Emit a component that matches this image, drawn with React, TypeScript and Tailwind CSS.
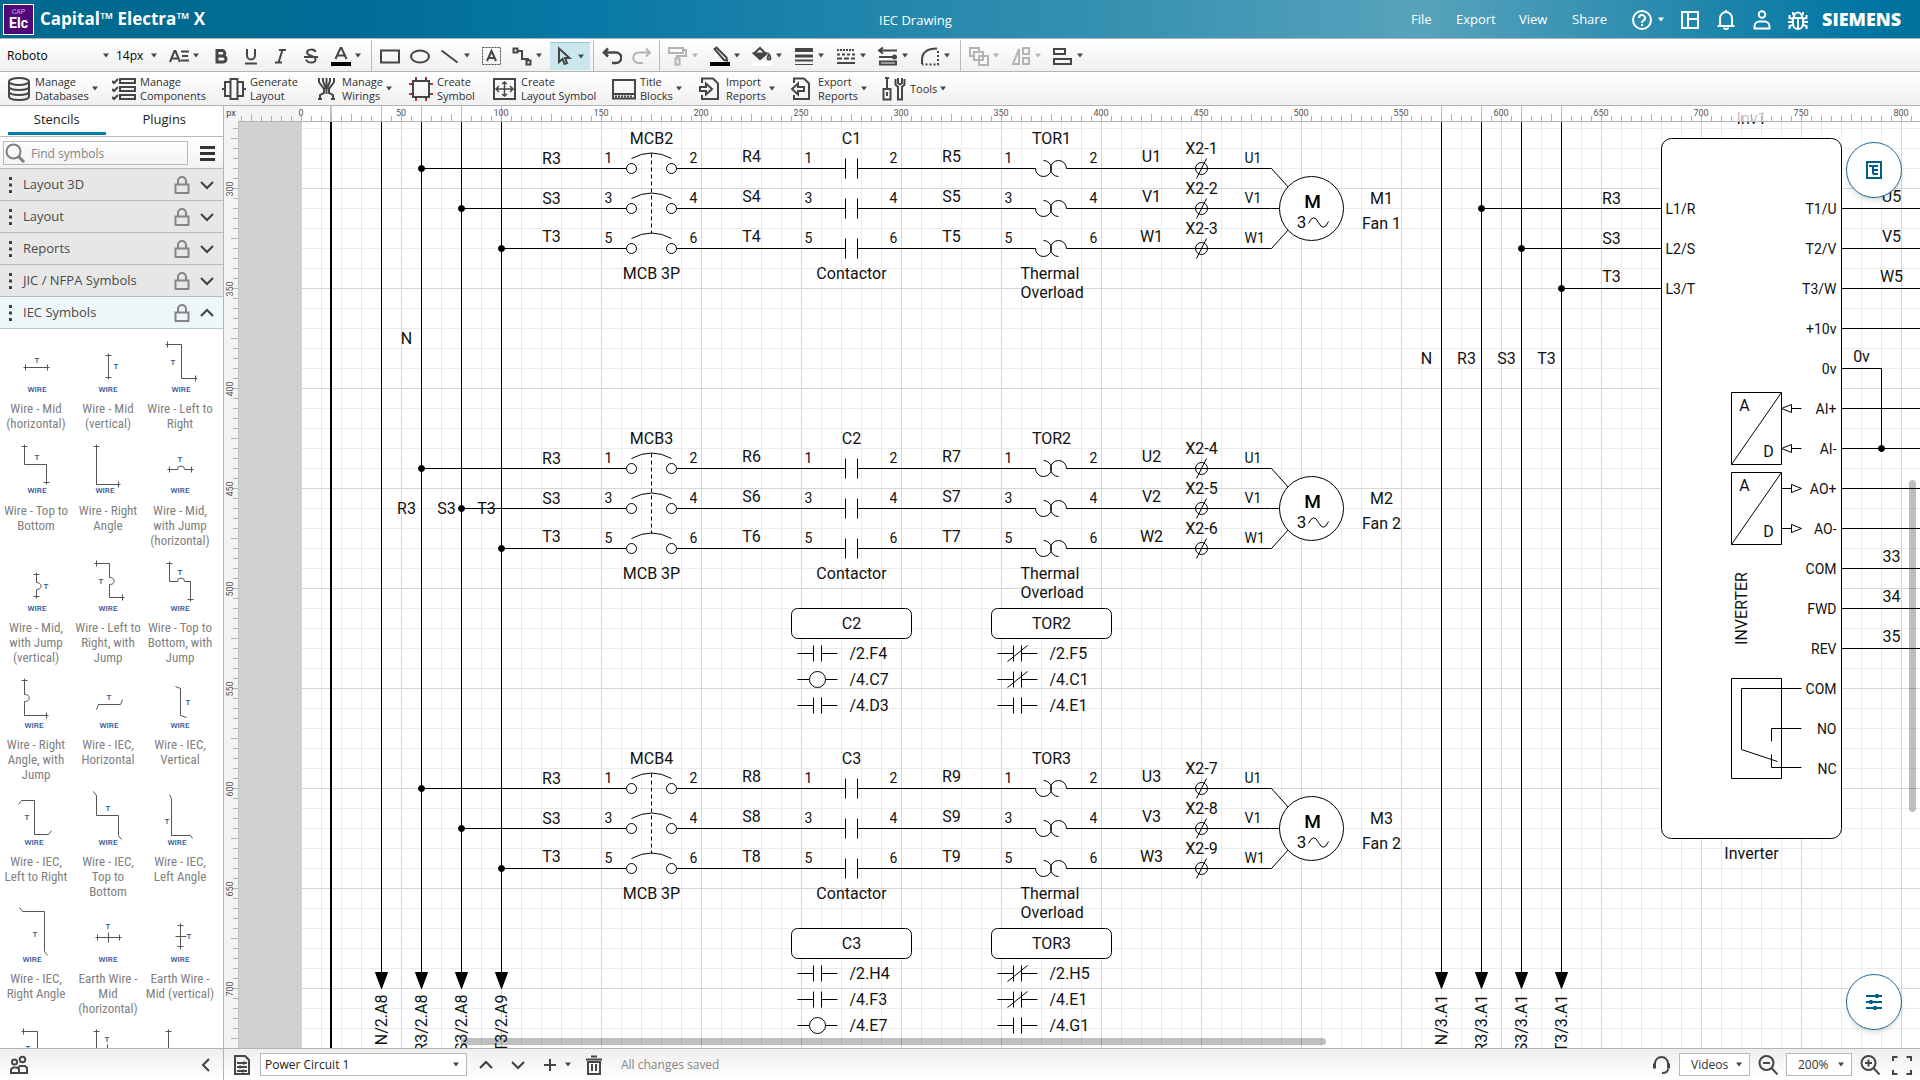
import type { ReactNode } from "react";

type Kids = { children: ReactNode };

/* ---------- shared bits ---------- */

function Icon({ children, size = 20, w = 2 }: Kids & { size?: number; w?: number }) {
  return (
    <svg
      width={size}
      height={size}
      viewBox={`0 0 ${size} ${size}`}
      fill="none"
      stroke="currentColor"
      strokeWidth={w}
      aria-hidden="true"
      className="shrink-0"
    >
      {children}
    </svg>
  );
}

function Caret() {
  return (
    <svg width="8" height="5" viewBox="0 0 8 5" fill="currentColor" aria-hidden="true" className="shrink-0">
      <path d="M1 0.5h6L4 4.5z" />
    </svg>
  );
}

function Sep() {
  return <span className="h-8 w-px bg-[#b9b9b9] mx-[3px]" />;
}

function Tool({ label, children, caret, disabled }: Kids & { label: string; caret?: boolean; disabled?: boolean }) {
  return (
    <button
      aria-label={label}
      disabled={disabled}
      className={`h-8 flex items-center gap-[3px] pl-[5px] ${caret ? "w-[42px]" : "w-[30px]"} ${
        disabled ? "text-[#b4b4b4]" : "text-[#464646]"
      }`}
    >
      {children}
      {caret && <Caret />}
    </button>
  );
}

interface DropdownProps {
  label: string;
  value: string;
  className: string;
  selectClass: string;
  caretClass?: string;
}

function Dropdown({ label, value, className, selectClass, caretClass = "right-[6px]" }: DropdownProps) {
  return (
    <div className={`relative flex items-center ${className}`}>
      <select
        aria-label={label}
        className={`appearance-none w-full h-full bg-transparent outline-none ${selectClass}`}
        defaultValue={value}
      >
        <option>{value}</option>
      </select>
      <span className={`absolute ${caretClass} text-[#464646] pointer-events-none`}>
        <Caret />
      </span>
    </div>
  );
}

/* ---------- header ---------- */

function Header() {
  return (
    <header className="relative h-[38px] shrink-0 flex items-center text-white bg-[linear-gradient(90deg,#00698f_0%,#006c95_18%,#0878a6_30%,#3490b0_57%,#57a3bc_74%,#3390b1_84%,#0076a3_97%,#00719c_100%)]">
      <div className="ml-[3px] w-[31px] h-[31px] border border-white bg-[#500a78] flex flex-col items-center justify-center">
        <span className="text-[7px] leading-[8px] text-[#d0a0f0] font-[Roboto]">CAP</span>
        <span className="text-[14px] leading-[14px] font-bold font-[Roboto]">Elc</span>
      </div>
      <h1 className="ml-[6px] text-[17px] leading-5 font-bold">Capital™ Electra™ X</h1>
      <span className="absolute left-1/2 top-[10px] -translate-x-[81px] text-[13px] leading-5">IEC Drawing</span>

      <nav className="ml-auto flex items-center pt-px text-[13px]">
        <a href="#file" className="w-[45px]">File</a>
        <a href="#export" className="w-[63px]">Export</a>
        <a href="#view" className="w-[53px]">View</a>
        <a href="#share" className="w-[60px]">Share</a>
      </nav>
      <button aria-label="Help" className="flex items-center gap-[5px] w-[49px] pt-px">
        <Icon>
          <circle cx="10" cy="10" r="9" />
          <path d="M7 8a3 3 0 1 1 4.400 2.600C10.300 11.200 10 11.700 10 13" />
          <path d="M10 14v2" />
        </Icon>
        <Caret />
      </button>
      <button aria-label="Panels" className="w-[35px] pt-px">
        <Icon>
          <path d="M1 2h16v16H1zM7 2v16M7 8h10M12 8V2" strokeWidth="0" />
          <path d="M1 2h16v16H1zM7 2v16M7 9h10" />
        </Icon>
      </button>
      <button aria-label="Notifications" className="w-9 pt-px">
        <Icon>
          <path d="M1.500 16h17M4 16V8.500a6 6.500 0 0 1 12 0V16M8 17.500c0 2 4 2 4 0M10 0v2" />
        </Icon>
      </button>
      <button aria-label="Account" className="w-9 pt-px">
        <Icon>
          <circle cx="10" cy="4.500" r="3.300" />
          <path d="M2.500 18.500V16a5 5 0 0 1 5-4.500h5a5 5 0 0 1 5 4.500v2.500z" />
        </Icon>
      </button>
      <button aria-label="Report a bug" className="w-[34px] pt-px">
        <Icon>
          <path d="M5 8v6a5 5 0 0 0 10 0V8zM10 8v11M6 7a4 4.500 0 0 1 8 0M5 2v2l2 2M15 2v2l-2 2M0 12h5M15 12h5M5 9L1.500 8V5M15 9l3.500-1V5M5 15l-3.500 1v3M15 15l3.500 1v3" />
        </Icon>
      </button>
      <span className="w-[98px] text-[18px] leading-6 font-extrabold">SIEMENS</span>
    </header>
  );
}

/* ---------- toolbars ---------- */

function FormatBar() {
  return (
    <div className="h-[33px] shrink-0 flex items-center pt-px border-t border-[#b4b4b4] bg-linear-to-b from-white to-[#f0f0f0]">
      <Dropdown label="Font" value="Roboto" className="w-28 h-7" selectClass="pl-[7px] text-[12px]" caretClass="right-[2px]" />
      <Dropdown label="Font size" value="14px" className="w-[47px] h-7" selectClass="pl-1 text-[12px]" caretClass="right-px" />
      <span className="w-[5px]" />
      <Tool label="Text format" caret>
        <Icon>
          <path d="M1 16L5.500 5h1L11 16M3 12.500h6M12 5.500h8M13 10h6M12 14.500h8" />
        </Icon>
      </Tool>
      <Tool label="Bold">
        <Icon w={3}>
          <path d="M6 4.500h5a2.500 2.500 0 0 1 0 5.500H6zM6 10h6a2.800 2.800 0 0 1 0 6H6z" />
        </Icon>
      </Tool>
      <Tool label="Underline">
        <Icon>
          <path d="M6 3v6.500a4 4 0 0 0 8 0V3M4 17.500h12" />
        </Icon>
      </Tool>
      <Tool label="Italic">
        <Icon>
          <path d="M8 4h7M4 16.500h7M11.500 4l-4 12.500" />
        </Icon>
      </Tool>
      <Tool label="Strikethrough">
        <Icon>
          <path d="M14.500 6c-1-3.500-8.500-3-8.500.5 0 4 8.500 2.500 8.500 7 0 4-8 4-9.500 0M3 11h14" />
        </Icon>
      </Tool>
      <Tool label="Text colour" caret>
        <Icon>
          <path d="M4.500 13L9.500 2h1l5 11M6.500 9.500h7" />
          <path d="M0 18h20" stroke="#000" strokeWidth="4" />
        </Icon>
      </Tool>
      <Sep />
      <Tool label="Rectangle">
        <Icon>
          <path d="M1 4.500h18v12H1z" />
        </Icon>
      </Tool>
      <Tool label="Ellipse">
        <Icon>
          <ellipse cx="10" cy="10.500" rx="9" ry="6" />
        </Icon>
      </Tool>
      <Tool label="Line" caret>
        <Icon>
          <path d="M1.500 4.500l16 12" />
        </Icon>
      </Tool>
      <Tool label="Text box">
        <Icon w={1}>
          <path d="M.5 1.500h18v17H.5z" strokeDasharray="2 1" />
          <path d="M5 15l4.500-10L14 15M6.500 12h6" strokeWidth="2" />
        </Icon>
      </Tool>
      <Tool label="Connector" caret>
        <Icon>
          <path d="M1.500 2.500h4v4h-4zM14.500 14.500h4v4h-4zM5.500 5H10v8h6v2" />
        </Icon>
      </Tool>
      <button
        aria-label="Select"
        className="h-7 w-10 ml-px flex items-center gap-[3px] pl-1 bg-[#cbe6ec] border-t border-[#8cc5d8] text-[#464646]"
      >
        <Icon>
          <path d="M5 2.500v13.500l3.500-3 2 5 2.500-1-2-5h4.500z" />
        </Icon>
        <Caret />
      </button>
      <Sep />
      <Tool label="Undo">
        <Icon w={2.5}>
          <path d="M2.500 6.500H14a4.800 4.800 0 0 1 0 10.500h-4M6 2.500l-4 4 4 4" />
        </Icon>
      </Tool>
      <Tool label="Redo" disabled>
        <Icon>
          <path d="M17.500 6.500H6.500A5 5 0 0 0 6.500 17H11M14 2.500l4 4-4 4" />
        </Icon>
      </Tool>
      <span className="h-8 w-px bg-[#b9b9b9] ml-[2px] mr-[3px]" />
      <Tool label="Format painter" caret disabled>
        <Icon>
          <path d="M1 2h14v5H1zM15 4h3v6H9v3M7.500 12.500h4v6h-4z" />
        </Icon>
      </Tool>
      <Tool label="Line colour" caret>
        <Icon>
          <path d="M4.500 3l2-1.500 10 10 .5 3-3-.5-9.500-11z" />
          <path d="M0 18h20" stroke="#000" strokeWidth="4" />
        </Icon>
      </Tool>
      <Tool label="Fill colour" caret>
        <Icon>
          <path d="M2 7.500L8 2l6 6-6 5z" />
          <path d="M2 7.500h12.500L8 13z" fill="currentColor" />
          <path d="M17 8.500c2 3 2 5 0 5s-2-2 0-5z" />
          <path d="M0 18h20" stroke="#fff" strokeWidth="4" />
        </Icon>
      </Tool>
      <Tool label="Line width" caret>
        <Icon>
          <path d="M1 4h18" strokeWidth="4" />
          <path d="M1 10h18" strokeWidth="3" />
          <path d="M1 14.500h18" />
          <path d="M1 18.500h18" strokeWidth="1" />
        </Icon>
      </Tool>
      <Tool label="Line style" caret>
        <Icon>
          <path d="M1 4h18" strokeDasharray="2 1" />
          <path d="M1 8.500h18" strokeDasharray="3 2" />
          <path d="M1 12.500h18" strokeDasharray="5 2" />
          <path d="M1 17h18" />
        </Icon>
      </Tool>
      <Tool label="Arrow style" caret>
        <Icon>
          <path d="M1 4.500h18M5 1.500l-4 3 4 3M1 11h14M2 15.500h16v3H2z" />
          <circle cx="16.500" cy="11" r="1.500" fill="currentColor" />
        </Icon>
      </Tool>
      <Tool label="Corner style" caret>
        <Icon>
          <path d="M2 18V14Q2 2.500 17 2.500" />
          <path d="M18 5v13.500H2" strokeDasharray="2 2" />
        </Icon>
      </Tool>
      <Sep />
      <Tool label="Arrange" caret disabled>
        <Icon>
          <path d="M1 2h9v8H1z" />
          <path d="M5 6h9v8H5zM10 10h9v9h-9z" fill="#fafafa" />
        </Icon>
      </Tool>
      <Tool label="Flip" caret disabled>
        <Icon>
          <path d="M8 3v15H2zM12 2h6v6h-6zM12 12h6v6h-6z" />
        </Icon>
      </Tool>
      <Tool label="Align" caret>
        <Icon>
          <path d="M1 3h11v5H1zM1 13h17v5H1z" />
        </Icon>
      </Tool>
    </div>
  );
}

function Action({ lines, width, caret, children }: Kids & { lines: string[]; width: string; caret?: boolean }) {
  return (
    <button className={`${width} shrink-0 h-full flex items-center text-left text-[11px] leading-[14px] text-[#303030]`}>
      <span className="text-[#464646]">{children}</span>
      <span className="ml-1 whitespace-nowrap">
        {lines.map((l) => (
          <span key={l} className="block">
            {l}
          </span>
        ))}
      </span>
      {caret && (
        <span className="ml-[2px] text-[#464646]">
          <Caret />
        </span>
      )}
    </button>
  );
}

function ActionBar() {
  return (
    <div className="h-[34px] shrink-0 flex items-center pl-[7px] border-t border-[#b4b4b4] bg-linear-to-b from-white to-[#f0f0f0]">
      <Action lines={["Manage", "Databases"]} width="w-[105px]" caret>
        <Icon size={24}>
          <ellipse cx="12" cy="4.500" rx="10" ry="3.500" />
          <path d="M2 4.500v15c0 4.600 20 4.600 20 0v-15M2 9.500c0 4.600 20 4.600 20 0M2 14.500c0 4.600 20 4.600 20 0" />
        </Icon>
      </Action>
      <Action lines={["Manage", "Components"]} width="w-[110px]">
        <Icon size={24}>
          <path d="M8 2h15v4H8zM8 10h15v4H8zM8 18h15v4H8zM0 4l2 2 4-4M0 12l2 2 4-4M0 20l2 2 4-4" />
        </Icon>
      </Action>
      <Action lines={["Generate", "Layout"]} width="w-[92px]">
        <Icon size={24}>
          <path d="M8.500 2h7v20h-7zM3 5h5.500v14H3zM15.500 5H21v14h-5.500zM0 12h3M21 12h3" />
        </Icon>
      </Action>
      <Action lines={["Manage", "Wirings"]} width="w-[95px]" caret>
        <Icon size={24}>
          <path d="M5 1v4l5 7v4l-4 2v5M20 1v4l-5 7v4l4 2v5M12.500 1v16M9 1v3l3 8M16 1v3l-3 8M4 22h4M17 22h4" />
        </Icon>
      </Action>
      <Action lines={["Create", "Symbol"]} width="w-[84px]">
        <Icon size={24}>
          <path d="M4 4h16v16H4zM0 7h4M0 17h4M20 7h4M20 17h4M7 4V0M17 4V0M7 20v4M17 20v4" />
          <path d="M0 7h2M0 17h2M22 7h2M22 17h2M7 1V0M17 1V0M7 22v2M17 22v2" stroke="#e03030" />
        </Icon>
      </Action>
      <Action lines={["Create", "Layout Symbol"]} width="w-[119px]">
        <Icon size={24}>
          <path d="M1 2h21v20H1z" />
          <path d="M3 12h17M11.500 5v14M6 9l-3 3 3 3M17 9l3 3-3 3M9 7l2.500-2L14 7M9 17l2.500 2 2.500-2" strokeWidth="1.5" />
        </Icon>
      </Action>
      <Action lines={["Title", "Blocks"]} width="w-[86px]" caret>
        <Icon size={24}>
          <path d="M1 3h22v18.500H1zM1 17h22" />
          <path d="M3 19.500h18" strokeDasharray="2 1" />
        </Icon>
      </Action>
      <Action lines={["Import", "Reports"]} width="w-[92px]" caret>
        <Icon size={24}>
          <path d="M4 6V1.500h11l5 5V22H4v-4M2 10h6V6.500l6 5.500-6 5.500V14H2z" />
        </Icon>
      </Action>
      <Action lines={["Export", "Reports"]} width="w-[92px]" caret>
        <Icon size={24}>
          <path d="M4 6V1.500h10l5 5V22H4v-4M14 10H8V6.500L2 12l6 5.500V14h6z" />
        </Icon>
      </Action>
      <Action lines={["Tools"]} width="w-[80px]" caret>
        <Icon size={24}>
          <path d="M5 1v11M3 1h4M1.500 12h7v10.500h-7zM5 15v4M13.500 2v5.500l2.500 2.500v12.500h4V10l2.500-2.500V2M16 1v5l2 1.500L20 6V1" />
        </Icon>
      </Action>
    </div>
  );
}

/* ---------- sidebar ---------- */

function Lock() {
  return (
    <svg width="16" height="18" viewBox="0 0 16 18" fill="none" stroke="#858585" strokeWidth="2" aria-hidden="true">
      <path d="M1.500 8.500h13V17h-13zM4 8.500V5a4 4 0 0 1 8 0v3.500" />
    </svg>
  );
}

function Chevron({ d }: { d: string }) {
  return (
    <svg width="14" height="14" viewBox="0 0 14 14" fill="none" stroke="#404040" strokeWidth="2" aria-hidden="true">
      <path d={d} />
    </svg>
  );
}

const CHEVRON_UP = "M1 10l6-6 6 6";
const CHEVRON_DOWN = "M1 4l6 6 6-6";

function LibraryRow({ name, open }: { name: string; open?: boolean }) {
  return (
    <button
      aria-expanded={!!open}
      className={`h-8 shrink-0 flex items-center border-t border-[#b9b9b9] text-left text-[#4a4a4a] text-[13px] pt-px pl-2 pr-[9px] ${
        open ? "bg-[#edf6f8]" : "bg-[#e7e7e7]"
      }`}
    >
      <svg width="5" height="18" viewBox="0 0 5 18" fill="#404040" aria-hidden="true">
        <path d="M1 1h3v3H1zM1 7.500h3v3H1zM1 14h3v3H1z" />
      </svg>
      <span className="ml-[10px] flex-1">{name}</span>
      <Lock />
      <span className="ml-[10px]">
        <Chevron d={open ? CHEVRON_UP : CHEVRON_DOWN} />
      </span>
    </button>
  );
}

interface Stencil {
  d: string;
  t?: [number, number];
  wire: [number, number];
  label: string[];
}

// every thumbnail is drawn in a 72x72 cell
const STENCILS: Stencil[][] = [
  [
    { d: "M23 38h26M25 35v6M47 35v6", t: [37, 31], wire: [37, 61], label: ["Wire - Mid", "(horizontal)"] },
    { d: "M36 24v26M33 26h6M33 48h6", t: [44, 37], wire: [36, 61], label: ["Wire - Mid", "(vertical)"] },
    { d: "M21 15h16v34h16M23 12v6M51 46v6", t: [29, 33], wire: [37, 61], label: ["Wire - Left to", "Right"] },
  ],
  [
    { d: "M24 13v20h22v20M21 15h6M43 51h6", t: [37, 26], wire: [37, 60], label: ["Wire - Top to", "Bottom"] },
    { d: "M24 13v40h24M21 15h6M46 50v6", wire: [33, 60], label: ["Wire - Right", "Angle"] },
    { d: "M23 38h10a3 3 0 0 1 7 0h9M25 35v6M47 35v6", t: [36, 28], wire: [36, 60], label: ["Wire - Mid,", "with Jump", "(horizontal)"] },
  ],
  [
    { d: "M36 24v10a4 3 0 0 1 0 7v9M33 26h6M33 48h6", t: [46, 38], wire: [37, 61], label: ["Wire - Mid,", "with Jump", "(vertical)"] },
    { d: "M22 15h15v14a4 3 0 0 1 0 7v13h15M24 12v6M50 46v6", t: [29, 33], wire: [36, 61], label: ["Wire - Left to", "Right, with", "Jump"] },
    { d: "M25 13v20h8a3 3 0 0 1 7 0h6v20M22 15h6M43 51h6", t: [36, 24], wire: [36, 61], label: ["Wire - Top to", "Bottom, with", "Jump"] },
  ],
  [
    { d: "M24 13v16a4 3 0 0 1 0 7v14h24M21 15h6M46 47v6", wire: [34, 61], label: ["Wire - Right", "Angle, with", "Jump"] },
    { d: "M24 44l2-5h22l2-5", t: [37, 32], wire: [37, 61], label: ["Wire - IEC,", "Horizontal"] },
    { d: "M31 21l5 2v27l6 2", t: [44, 37], wire: [36, 61], label: ["Wire - IEC,", "Vertical"] },
  ],
  [
    { d: "M18 22l3-4h13v34h14l3-4", t: [27, 35], wire: [34, 61], label: ["Wire - IEC,", "Left to Right"] },
    { d: "M21 9l3 4v20h22v20l3 4", t: [36, 26], wire: [36, 61], label: ["Wire - IEC,", "Top to", "Bottom"] },
    { d: "M25 12l2 4v37h19l2 3", t: [23, 39], wire: [33, 61], label: ["Wire - IEC,", "Left Angle"] },
  ],
  [
    { d: "M19 8l3 4h22v40l3 4", t: [35, 35], wire: [32, 61], label: ["Wire - IEC,", "Right Angle"] },
    { d: "M23 38h26M25 35v6M47 35v6M36 33v10", t: [36, 27], wire: [36, 61], label: ["Earth Wire -", "Mid", "(horizontal)"] },
    { d: "M36 24v26M33 26h6M33 47h6M31 37h11", t: [45, 37], wire: [36, 61], label: ["Earth Wire -", "Mid (vertical)"] },
  ],
  [
    { d: "M21 15h16v34M23 12v6", t: [28, 32], wire: [36, 61], label: ["Earth Wire -", "Left to Right"] },
    { d: "M24 13v40M21 15h6M35 28v10", t: [35, 23], wire: [36, 61], label: ["Earth Wire -", "Top to Bottom"] },
    { d: "M24 13v40M21 15h6", wire: [36, 61], label: ["Earth Wire -", "Right Angle"] },
  ],
];

function StencilCell({ item }: { item: Stencil }) {
  return (
    <button className="w-[72px] flex flex-col items-center">
      <svg width="72" height="72" viewBox="0 0 72 72" aria-hidden="true" className="font-[Roboto]">
        <path d={item.d} transform="translate(.5 .5)" fill="none" stroke="#555" />
        <g fill="#2f5597" fontSize="8" fontWeight="500" textAnchor="middle">
          {item.t && (
            <text x={item.t[0]} y={item.t[1] + 3}>
              T
            </text>
          )}
          <text x={item.wire[0]} y={item.wire[1] + 2}>
            WIRE
          </text>
        </g>
      </svg>
      <span className="whitespace-nowrap text-center text-[13px] leading-[15px] text-[#808080] font-['Roboto_Condensed','Liberation_Sans_Narrow',Roboto,sans-serif]">
        {item.label.map((l) => (
          <span key={l} className="block">
            {l}
          </span>
        ))}
      </span>
    </button>
  );
}

function Sidebar() {
  return (
    <aside className="w-[224px] shrink-0 flex flex-col border-r border-[#b4b4b4] bg-white">
      <div role="tablist" className="h-[31px] shrink-0 flex pl-2 text-[13px] font-medium text-[#222] border-b border-[#b9b9b9]">
        <button role="tab" aria-selected="true" className="w-[98px] h-[29px] pt-px border-b-[3px] border-[#0b7ba8]">
          Stencils
        </button>
        <button role="tab" aria-selected="false" className="w-[118px] h-[29px] pt-px border-b-[3px] border-transparent">
          Plugins
        </button>
      </div>
      <div className="h-[31px] shrink-0 flex items-center pt-px pl-[3px] pr-2 bg-linear-to-b from-white to-[#f2f2f2]">
        <div className="relative w-[185px] h-6 flex items-center">
          <span className="absolute left-[2px] text-[#808080]">
            <Icon>
              <circle cx="8.500" cy="8.500" r="7" />
              <path d="M13.500 13.500l5.500 5.500" strokeWidth="3" />
            </Icon>
          </span>
          <input
            aria-label="Find symbols"
            placeholder="Find symbols"
            className="w-full h-full pl-[27px] text-[12px] bg-transparent border border-[#b9b9b9] placeholder:text-[#858585] outline-none"
          />
        </div>
        <button aria-label="Menu" className="ml-auto text-[#333]">
          <svg width="15" height="15" viewBox="0 0 15 15" fill="currentColor" aria-hidden="true">
            <path d="M0 0h15v3H0zM0 6h15v3H0zM0 12h15v3H0z" />
          </svg>
        </button>
      </div>
      <LibraryRow name="Layout 3D" />
      <LibraryRow name="Layout" />
      <LibraryRow name="Reports" />
      <LibraryRow name="JIC / NFPA Symbols" />
      <LibraryRow name="IEC Symbols" open />
      <div className="flex-1 min-h-0 overflow-hidden border-t border-[#b9c9cc]">
        {STENCILS.map((row, i) => (
          <div key={i} className="flex items-start">
            {row.map((s) => (
              <StencilCell key={s.label.join(" ")} item={s} />
            ))}
          </div>
        ))}
      </div>
    </aside>
  );
}

/* ---------- schematic (sheet units, 2 per ruler unit) ---------- */

type Contact = "no" | "nc" | "coil";

interface Feeder {
  y: number;
  n: number;
  wires: [number, number];
  fan: string;
  refs?: [Contact, string][][];
}

const FEEDERS: Feeder[] = [
  { y: 580, n: 1, wires: [4, 5], fan: "Fan 1" },
  {
    y: 880,
    n: 2,
    wires: [6, 7],
    fan: "Fan 2",
    refs: [
      [["no", "/2.F4"], ["coil", "/4.C7"], ["no", "/4.D3"]],
      [["nc", "/2.F5"], ["nc", "/4.C1"], ["no", "/4.E1"]],
    ],
  },
  {
    y: 1200,
    n: 3,
    wires: [8, 9],
    fan: "Fan 2",
    refs: [
      [["no", "/2.H4"], ["no", "/4.F3"], ["coil", "/4.E7"]],
      [["nc", "/2.H5"], ["nc", "/4.E1"], ["no", "/4.G1"]],
    ],
  },
];

interface LabelProps {
  x: number;
  y: number;
  size?: number;
  anchor?: "start" | "middle" | "end";
  children: ReactNode;
}

function T({ x, y, size = 16, anchor = "middle", children }: LabelProps) {
  return (
    <text x={x} y={y - 1} fontSize={size} textAnchor={anchor} fill="#111" stroke="none">
      {children}
    </text>
  );
}

function Dot({ x, y }: { x: number; y: number }) {
  return <circle cx={x} cy={y} r="3" fill="#000" />;
}

function Phase({ y, i, feeder }: { y: number; i: number; feeder: Feeder }) {
  const p = "RST"[i];
  const winding = "UVW"[i];
  const a = i * 2 + 1;
  const b = i * 2 + 2;
  return (
    <g transform={`translate(0 ${y})`}>
      <path d={`M${120 + i * 40} 0H325M375 0H544M556 0H734M765 0H970`} />
      <Dot x={120 + i * 40} y={0} />
      <circle cx="330" cy="0" r="5" fill="#fff" />
      <circle cx="370" cy="0" r="5" fill="#fff" />
      <path d="M330 -10Q350 -21 370 -10M544 -10v20M556 -10v20" />
      <path d="M734 0a8 8 0 1 0 8 -8M765 0a8 8 0 1 0 -8 8" />
      <circle cx="900" cy="0" r="6" />
      <path d="M895 10L905 -10" />
      <T x={250} y={i === 2 ? -6 : -4}>{p}3</T>
      <T x={450} y={-6}>{p}{feeder.wires[0]}</T>
      <T x={650} y={-6}>{p}{feeder.wires[1]}</T>
      <T x={850} y={-6}>{winding}{feeder.n}</T>
      <T x={900} y={-14}>X2-{(feeder.n - 1) * 3 + i + 1}</T>
      <T x={943} y={-5} size={14} anchor="start">{winding}1</T>
      {[307, 507, 707].map((x) => (
        <T key={x} x={x} y={-5} size={14}>{a}</T>
      ))}
      {[392, 592, 792].map((x) => (
        <T key={x} x={x} y={-5} size={14}>{b}</T>
      ))}
    </g>
  );
}

function RefTable({ x, title, rows }: { x: number; title: string; rows: [Contact, string][] }) {
  return (
    <g transform={`translate(${x} 140)`}>
      <rect width="120" height="30" rx="6" fill="#fff" />
      <T x={60} y={21}>{title}</T>
      {rows.map(([kind, ref], i) => (
        <g key={i} transform={`translate(0 ${45 + i * 26})`}>
          {kind === "coil" ? (
            <>
              <path d="M6 0H18M34 0H46" />
              <circle cx="26" cy="0" r="8" fill="#fff" />
            </>
          ) : (
            <path d="M6 0H22M22 -8v16M30 -8v16M30 0H46" />
          )}
          {kind === "nc" && <path d="M16 8L36 -8" />}
          <T x={58} y={6} anchor="start">{ref}</T>
        </g>
      ))}
    </g>
  );
}

function FeederGroup({ feeder }: { feeder: Feeder }) {
  const { y, n } = feeder;
  return (
    <g>
      <path d={`M350 ${y - 15}v80`} strokeDasharray="4 3" />
      {[0, 1, 2].map((i) => (
        <Phase key={i} y={y + i * 40} i={i} feeder={feeder} />
      ))}
      <g transform={`translate(0 ${y})`}>
        <T x={350} y={-24}>MCB{n + 1}</T>
        <T x={550} y={-24}>C{n}</T>
        <T x={750} y={-24}>TOR{n}</T>
        <T x={350} y={111}>MCB 3P</T>
        <T x={550} y={111}>Contactor</T>
        <T x={719} y={111} anchor="start">Thermal</T>
        <T x={719} y={130} anchor="start">Overload</T>
        <path d="M970 0l18 20M970 40h10M970 80l18 -20" />
        <circle cx="1010" cy="40" r="32" fill="#fff" />
        <text x="1011" y="39" fontSize="19" fontWeight="500" textAnchor="middle" fill="#000" stroke="none">M</text>
        <T x={1000} y={60} size={17}>3</T>
        <path d="M1007 55q5 -11 10 -1t10 -1" />
        <T x={1080} y={36}>M{n}</T>
        <T x={1080} y={61}>{feeder.fan}</T>
      </g>
      {feeder.refs && (
        <g transform={`translate(0 ${y})`}>
          <RefTable x={490} title={`C${n}`} rows={feeder.refs[0]} />
          <RefTable x={690} title={`TOR${n}`} rows={feeder.refs[1]} />
        </g>
      )}
    </g>
  );
}

const BUSES = [
  { x: 80, label: "N/2.A8" },
  { x: 120, label: "R3/2.A8" },
  { x: 160, label: "S3/2.A8" },
  { x: 200, label: "T3/2.A9" },
  { x: 1140, label: "N/3.A1" },
  { x: 1180, label: "R3/3.A1" },
  { x: 1220, label: "S3/3.A1" },
  { x: 1260, label: "T3/3.A1" },
];

const TERMINALS = ["T1/U", "T2/V", "T3/W", "+10v", "0v", "AI+", "AI-", "AO+", "AO-", "COM", "FWD", "REV", "COM", "NO", "NC"];
const OUT_WIRES = [620, 660, 700, 740, 820, 860, 900, 940, 980, 1020, 1060];

function Converter({ y }: { y: number }) {
  return (
    <g transform={`translate(1430 ${y})`}>
      <path d="M0 0h50v72H0zM0 72L50 0" />
      <T x={13} y={19}>A</T>
      <T x={37} y={65}>D</T>
    </g>
  );
}

function Inverter() {
  return (
    <g>
      <T x={1450} y={536}>Inv1</T>
      <rect x="1360" y="550" width="180" height="700" rx="10" fill="#fff" />
      <T x={1450} y={1271}>Inverter</T>
      {["R", "S", "T"].map((p, i) => (
        <g key={p}>
          <path d={`M${1180 + i * 40} ${620 + i * 40}H1360`} />
          <Dot x={1180 + i * 40} y={620 + i * 40} />
          <T x={1310} y={(i === 2 ? 614 : 616) + i * 40}>{p}3</T>
          <T x={1364} y={626 + i * 40} size={14} anchor="start">L{i + 1}/{p}</T>
          <T x={1590} y={614 + i * 40}>{"UVW"[i]}5</T>
          <T x={1590} y={974 + i * 40}>{33 + i}</T>
        </g>
      ))}
      {TERMINALS.map((t, i) => (
        <T key={i} x={1535} y={626 + i * 40} size={14} anchor="end">{t}</T>
      ))}
      <path d={OUT_WIRES.map((y) => `M1540 ${y}H3000`).join("")} />
      <path d="M1540 780h40v80" />
      <Dot x={1580} y={860} />
      <T x={1560} y={774}>0v</T>

      <Converter y={804} />
      <Converter y={884} />
      <path d="M1480 820l10 -4v8zM1490 820h10M1480 860l10 -4v8zM1490 860h10" />
      <path d="M1500 900l-10 -4v8zM1490 900h-10M1500 940l-10 -4v8zM1490 940h-10" />
      <g transform="translate(1446 1020) rotate(-90)">
        <T x={0} y={0}>INVERTER</T>
      </g>
      <path d="M1430 1090h50v100h-50zM1500 1100h-60v61l36 12M1500 1140h-30v13M1500 1179h-30v-13" />
    </g>
  );
}

function Sheet() {
  return (
    <svg className="absolute inset-0 w-full h-full font-[Roboto]" role="img" aria-label="Power circuit schematic">
      <defs>
        <pattern id="minor" width="20" height="20" patternUnits="userSpaceOnUse">
          <path d="M0 0h20v1H0zM0 0h1v20H0z" fill="#ececec" />
        </pattern>
        <pattern id="major" width="100" height="100" patternUnits="userSpaceOnUse">
          <path d="M0 0h100v1H0zM0 0h1v100H0z" fill="#d6d6d6" />
        </pattern>
      </defs>
      <g transform="translate(77 -518)">
        <rect width="3000" height="2400" fill="#fff" />
        <rect width="3000" height="2400" fill="url(#minor)" />
        <rect width="3000" height="2400" fill="url(#major)" />
      </g>
      <g transform="translate(77.5 -517.5)" fill="none" stroke="#000">
        <path d="M29.500 0V2400" strokeWidth="2" />
        {BUSES.map((b) => (
          <g key={b.label}>
            <path d={`M${b.x} 0V1390`} />
            <path d={`M${b.x - 6} 1384h12l-6 16z`} fill="#000" />
            <g transform={`translate(${b.x + 6} 1406) rotate(-90)`}>
              <T x={0} y={0} anchor="end">{b.label}</T>
            </g>
          </g>
        ))}
        {FEEDERS.map((f) => (
          <FeederGroup key={f.n} feeder={f} />
        ))}
        <Inverter />
        <T x={105} y={756}>N</T>
        {["R3", "S3", "T3"].map((t, i) => (
          <T key={t} x={105 + i * 40} y={926}>{t}</T>
        ))}
        {["N", "R3", "S3", "T3"].map((t, i) => (
          <T key={t} x={1125 + i * 40} y={776}>{t}</T>
        ))}
      </g>
    </svg>
  );
}

/* ---------- rulers ---------- */

const TICKS = Array.from({ length: 420 }, (_, i) => (i - 12) * 5);

function tickLength(v: number) {
  return v % 50 === 0 ? 6 : v % 25 === 0 ? 7 : 5;
}

function TopRuler() {
  return (
    <svg className="absolute left-0 top-0 w-full h-4 font-[Roboto]" aria-hidden="true">
      <rect width="100%" height="16" fill="#fff" fillOpacity=".75" />
      <g transform="translate(77 0)">
        <path d={TICKS.filter((v) => v > -32).map((v) => `M${v * 2 + 0.5} 15v-${tickLength(v)}`).join("")} stroke="#b0b0b0" />
        {TICKS.filter((v) => v >= 0 && v % 50 === 0).map((v) => (
          <text key={v} x={v * 2} y="10" fontSize="9" fill="#555" textAnchor="middle">
            {v}
          </text>
        ))}
      </g>
      <path d="M0 15.500H4000" stroke="#b4b4b4" />
    </svg>
  );
}

function SideRuler() {
  return (
    <svg className="absolute left-0 top-0 w-[15px] h-full font-[Roboto]" aria-hidden="true">
      <rect width="15" height="100%" fill="#f4f4f4" />
      <g transform="translate(0 -518)">
        <path d={TICKS.filter((v) => v > 265).map((v) => `M14 ${v * 2 + 0.5}h-${tickLength(v)}`).join("")} stroke="#b0b0b0" />
        {TICKS.filter((v) => v >= 300 && v % 50 === 0).map((v) => (
          <g key={v} transform={`translate(9 ${v * 2 + 1}) rotate(-90)`}>
            <text fontSize="9" fill="#555" textAnchor="middle">
              {v}
            </text>
          </g>
        ))}
      </g>
      <path d="M14.500 15V4000" stroke="#c4c4c4" />
      <rect width="15" height="15" fill="#f4f4f4" />
      <text x="7" y="10" fontSize="9" fill="#444" textAnchor="middle">
        px
      </text>
    </svg>
  );
}

function RoundButton({ label, place, children }: Kids & { label: string; place: string }) {
  return (
    <button
      aria-label={label}
      className={`absolute right-[18px] ${place} w-14 h-14 rounded-full bg-white border border-[#1d6a94] text-[#005f87] shadow-md flex items-center justify-center`}
    >
      {children}
    </button>
  );
}

function Canvas() {
  return (
    <main className="relative flex-1 min-w-0 overflow-hidden bg-[#d0d0d0]">
      <Sheet />
      <TopRuler />
      <SideRuler />
      <div className="absolute left-[14%] right-[35%] bottom-[3px] h-[7px] rounded-full bg-black/25" />
      <div className="absolute right-1 top-[374px] bottom-[236px] w-[7px] rounded-full bg-black/25" />
      <RoundButton label="Terminal editor" place="top-9">
        <svg width="16" height="18" viewBox="0 0 16 18" fill="none" stroke="currentColor" strokeWidth="2" aria-hidden="true">
          <path d="M1 1h14v16H1zM3 5h9M7 5v8M7 9h5M7 13h5" />
        </svg>
      </RoundButton>
      <RoundButton label="Properties" place="bottom-[18px]">
        <svg width="16" height="16" viewBox="0 0 16 16" fill="none" stroke="currentColor" strokeWidth="2" aria-hidden="true">
          <path d="M0 2h16M0 8h16M0 14h16" />
          <path d="M11 0v4M5 6v4M9 12v4" strokeWidth="3" />
        </svg>
      </RoundButton>
    </main>
  );
}

/* ---------- status bar ---------- */

function StatusBar() {
  return (
    <footer className="h-8 shrink-0 flex items-center border-t border-[#b4b4b4] bg-linear-to-b from-[#efefef] to-white text-[#464646]">
      <div className="w-[224px] h-full flex items-center justify-between pl-[9px] pr-[9px] border-r border-[#b4b4b4]">
        <button aria-label="Collaborators">
          <Icon>
            <circle cx="5.500" cy="7" r="2.500" />
            <circle cx="13.500" cy="4.500" r="2.800" />
            <path d="M2 18v-3.500l2-2h4l2 2V18zM10 18h8v-5l-2-2h-5l-1.500 1.500" />
          </Icon>
        </button>
        <button aria-label="Collapse panel">
          <Chevron d="M9 1L3 7l6 6" />
        </button>
      </div>
      <button aria-label="Page properties" className="ml-2 w-7">
        <Icon>
          <path d="M3 1h10l4 4v14H3zM5 8h10M5 12h10M5 16h10" />
          <path d="M12 6.500v3M8 10.500v3M11 14.500v3" />
        </Icon>
      </button>
      <Dropdown label="Page" value="Power Circuit 1" className="w-[207px] h-[23px] border border-[#b9b9b9] bg-white" selectClass="pl-1 text-[12px] text-[#222]" />
      <button aria-label="Previous page" className="w-8 ml-1 pl-2">
        <Chevron d={CHEVRON_UP} />
      </button>
      <button aria-label="Next page" className="w-8 pl-2">
        <Chevron d={CHEVRON_DOWN} />
      </button>
      <button aria-label="Add page" className="w-[42px] pl-[7px] flex items-center gap-[6px]">
        <Icon size={16}>
          <path d="M2 8h12M8 2v12" />
        </Icon>
        <Caret />
      </button>
      <button aria-label="Delete page" className="w-11 pl-[7px]">
        <Icon>
          <path d="M2 4.500h16M7 1.500h6M4 7v12h12V7zM8 9v7M12 9v7" />
        </Icon>
      </button>
      <span className="text-[12px] text-[#858585]">All changes saved</span>

      <button aria-label="Support" className="ml-auto w-7">
        <Icon>
          <path d="M4 11.500V8.500a6.500 6.500 0 0 1 13 0v3M17 14c0 2.500-2 4-6 4" />
          <path d="M3.500 8.500v5M17.500 8.500v5" strokeWidth="3" />
        </Icon>
      </button>
      <Dropdown label="Videos" value="Videos" className="w-[71px] h-[23px] border border-[#b9b9b9] bg-white" selectClass="pl-[11px] text-[12px] text-[#333]" />
      <button aria-label="Zoom out" className="w-9 pl-2">
        <Icon>
          <circle cx="8.500" cy="8" r="7" />
          <path d="M13.500 13l6 6.500M5 8h7" />
        </Icon>
      </button>
      <Dropdown label="Zoom" value="200%" className="w-[66px] h-[23px] border border-[#b9b9b9] bg-white" selectClass="pl-[11px] text-[12px] text-[#333]" />
      <button aria-label="Zoom in" className="w-8 pl-2">
        <Icon>
          <circle cx="8.500" cy="8" r="7" />
          <path d="M13.500 13l6 6.500M5 8h7M8.500 4.500v7" />
        </Icon>
      </button>
      <button aria-label="Full screen" className="w-9 pl-2">
        <Icon>
          <path d="M1 6V2h4.500M14.500 2H19v4M19 15v4h-4.500M5.500 19H1v-4" />
        </Icon>
      </button>
    </footer>
  );
}

export default function App() {
  return (
    <div className="h-screen flex flex-col overflow-hidden font-['Open_Sans',sans-serif]">
      <Header />
      <FormatBar />
      <ActionBar />
      <div className="flex-1 min-h-0 flex border-t border-[#b4b4b4]">
        <Sidebar />
        <Canvas />
      </div>
      <StatusBar />
    </div>
  );
}
